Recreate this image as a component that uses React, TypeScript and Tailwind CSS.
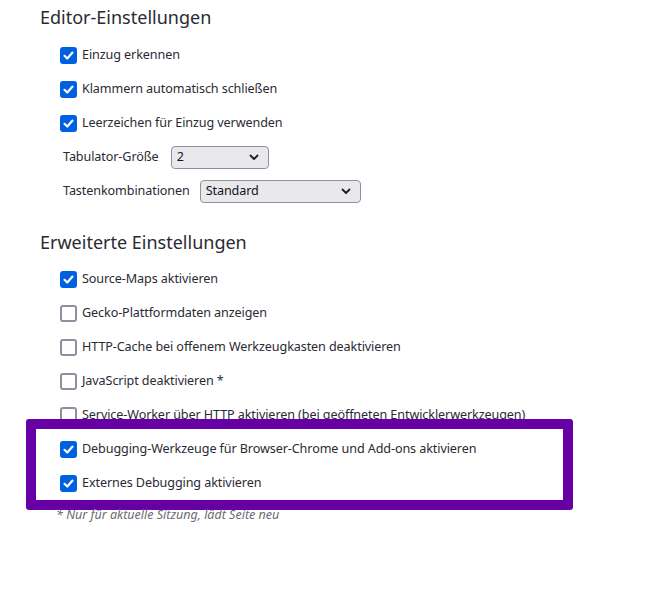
import React from "react";

const font = { fontFamily: '"Noto Sans", "Open Sans", sans-serif' };

function Check({ checked }: { checked: boolean }) {
  if (checked) {
    return (
      <span className="flex h-[17px] w-[17px] shrink-0 items-center justify-center rounded-[3px] bg-[#0061e0]">
        <svg width="13" height="13" viewBox="0 0 13 13">
          <polyline points="2.5,6.8 5.3,9.5 10.5,3.6" fill="none" stroke="#fff" strokeWidth="2.2" strokeLinecap="round" strokeLinejoin="round" />
        </svg>
      </span>
    );
  }
  return <span className="block h-[17px] w-[17px] shrink-0 rounded-[3px] border-2 border-[#8f8f9d] bg-white" />;
}

function Row({ checked, label }: { checked: boolean; label: string }) {
  return (
    <div className="flex h-[34px] items-center gap-[5px] pl-[60px] pt-[1px]">
      <Check checked={checked} />
      <span className="text-[12.6px] tracking-[-0.1px] text-[#2b2a33] whitespace-nowrap">{label}</span>
    </div>
  );
}

function Chevron() {
  return (
    <svg width="10" height="7" viewBox="0 0 10 7">
      <polyline points="1.5,1.5 5,5 8.5,1.5" fill="none" stroke="#1f1f23" strokeWidth="1.8" strokeLinecap="round" strokeLinejoin="round" />
    </svg>
  );
}

function Select({ value, width }: { value: string; width: string }) {
  return (
    <div className={`flex h-[23px] ${width} items-center justify-between rounded-[4px] border border-[#8f8f9d] bg-[#e9e9ed] pl-[5px] pr-[9px]`}>
      <span className="text-[12.6px] tracking-[-0.1px] text-[#15141a]">{value}</span>
      <Chevron />
    </div>
  );
}

export default function App() {
  return (
    <div className="flex min-h-[597px] w-[669px] flex-col bg-white" style={font}>
      <div className="flex h-[34px] items-center pl-[40px] text-[18px] text-[#2b2a33]">Editor-Einstellungen</div>
      <div className="mt-[4px]">
        <Row checked label="Einzug erkennen" />
        <Row checked label="Klammern automatisch schließen" />
        <Row checked label="Leerzeichen für Einzug verwenden" />
        <div className="flex h-[34px] items-center gap-[12px] pl-[63px]">
          <span className="text-[12.6px] tracking-[-0.1px] text-[#2b2a33]">Tabulator-Größe</span>
          <Select value="2" width="w-[98px]" />
        </div>
        <div className="flex h-[34px] items-center gap-[10px] pl-[63px]">
          <span className="text-[12.6px] tracking-[-0.1px] text-[#2b2a33]">Tastenkombinationen</span>
          <Select value="Standard" width="w-[161px]" />
        </div>
      </div>
      <div className="mt-[17px] flex h-[34px] items-center pl-[40px] text-[18px] text-[#2b2a33]">Erweiterte Einstellungen</div>
      <div className="mt-[3px]">
        <Row checked label="Source-Maps aktivieren" />
        <Row checked={false} label="Gecko-Plattformdaten anzeigen" />
        <Row checked={false} label="HTTP-Cache bei offenem Werkzeugkasten deaktivieren" />
        <Row checked={false} label="JavaScript deaktivieren *" />
        <Row checked={false} label="Service-Worker über HTTP aktivieren (bei geöffneten Entwicklerwerkzeugen)" />
      </div>
      <div className="relative z-10 ml-[26px] mt-[-13px] w-[547px] rounded-[3px] border-[10px] border-[#6600a4] bg-white pt-[3px] [&>div]:pl-[24px]">
        <Row checked label="Debugging-Werkzeuge für Browser-Chrome und Add-ons aktivieren" />
        <Row checked label="Externes Debugging aktivieren" />
      </div>
      <div className="relative z-20 mt-[-3px] pl-[56px] text-[12.5px] leading-[16px] italic text-[#6b6b72]">* Nur für aktuelle Sitzung, lädt Seite neu</div>
    </div>
  );
}
